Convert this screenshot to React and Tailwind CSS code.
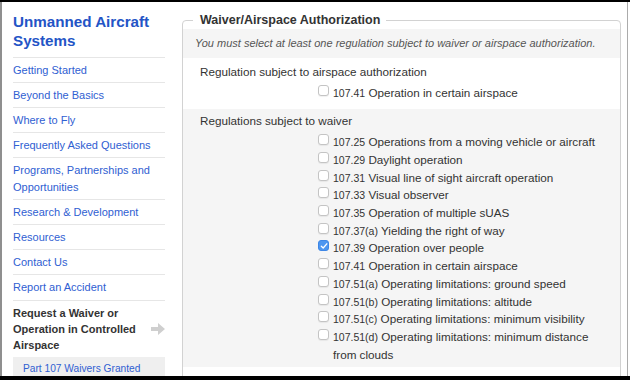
import React from "react";

const links = [
  "Getting Started",
  "Beyond the Basics",
  "Where to Fly",
  "Frequently Asked Questions",
  "Programs, Partnerships and Opportunities",
  "Research & Development",
  "Resources",
  "Contact Us",
  "Report an Accident",
];

const options = [
  ["107.25", "Operations from a moving vehicle or aircraft", false],
  ["107.29", "Daylight operation", false],
  ["107.31", "Visual line of sight aircraft operation", false],
  ["107.33", "Visual observer", false],
  ["107.35", "Operation of multiple sUAS", false],
  ["107.37(a)", "Yielding the right of way", false],
  ["107.39", "Operation over people", true],
  ["107.41", "Operation in certain airspace", false],
  ["107.51(a)", "Operating limitations: ground speed", false],
  ["107.51(b)", "Operating limitations: altitude", false],
  ["107.51(c)", "Operating limitations: minimum visibility", false],
  ["107.51(d)", "Operating limitations: minimum distance from clouds", false],
];

function Box({ checked }) {
  if (checked) {
    return (
      <span className="mt-[1px] flex h-[11px] w-[11px] shrink-0 items-center justify-center rounded-[3px] border border-[#3d86e6] bg-[#4d96f0]">
        <svg width="8" height="8" viewBox="0 0 8 8">
          <path d="M1.3 4.2 L3.2 6 L6.8 1.8" fill="none" stroke="#fff" strokeWidth="1.3" strokeLinecap="round" strokeLinejoin="round" />
        </svg>
      </span>
    );
  }
  return (
    <span className="mt-[1px] block h-[11px] w-[11px] shrink-0 rounded-[3px] border border-[#c4c4c4] bg-white shadow-[0_1px_1px_rgba(0,0,0,0.06)]" />
  );
}

function Option({ num, label, checked }) {
  return (
    <div className="flex gap-[4px]">
      <Box checked={checked} />
      <span className="text-[11.7px] leading-[17.7px] text-[#333]">
        <span className="text-[10.5px] leading-none">{num}</span> {label}
      </span>
    </div>
  );
}

export default function App() {
  return (
    <div className="h-[380px] w-[630px] overflow-hidden bg-black pt-[2px] font-['Liberation_Sans',Arial,sans-serif]">
      <div className="flex h-[374px] overflow-hidden border-l-2 border-[#8f8f8f] bg-white">
        <aside className="ml-[11px] w-[152px] shrink-0">
          <div className="border-b border-[#e6e6e6] pb-[7px] pt-[9.5px] text-[15.2px] font-bold leading-[19px] text-[#2354c6]">
            Unmanned Aircraft Systems
          </div>
          {links.map((l) => (
            <div key={l} className="border-b border-[#e6e6e6] py-[4px] text-[11px] leading-[16.2px] text-[#2f60d2]">
              {l}
            </div>
          ))}
          <div className="flex items-center py-[4px]">
            <div className="w-[135px] text-[11px] font-bold leading-[16.2px] text-[#333]">
              Request a Waiver or Operation in Controlled Airspace
            </div>
            <svg className="ml-auto" width="14" height="12" viewBox="0 0 14 12">
              <path d="M0 4 H7 V0 L14 6 L7 12 V8 H0 Z" fill="#cfcfcf" />
            </svg>
          </div>
          <div className="bg-[#efefef] py-[4px] pl-[10px] text-[10.2px] leading-[16px] text-[#2f60d2]">
            Part 107 Waivers Granted
          </div>
        </aside>
        <main className="ml-[17px] w-[446px] shrink-0 border-r border-[#ababab] pr-[6px] pt-[10px]">
          <fieldset className="h-[420px] rounded-[4px] border border-[#d2d2d2]">
            <legend className="ml-[10px] pl-[7px] pr-[6px] text-[12.5px] font-bold leading-[17px] text-[#333]">
              Waiver/Airspace Authorization
            </legend>
            <div className="h-[29px] bg-[#f5f5f5] pl-[12px] text-[11px] italic leading-[28px] text-[#555]">
              You must select at least one regulation subject to waiver or airspace authorization.
            </div>
            <div className="pb-[8px] pt-[5px]">
              <div className="pl-[17px] text-[11.7px] leading-[17px] text-[#333]">
                Regulation subject to airspace authorization
              </div>
              <div className="mt-[3.5px] pl-[135px]">
                <Option num="107.41" label="Operation in certain airspace" checked={false} />
              </div>
            </div>
            <div className="bg-[#f5f5f5] pb-[4px] pt-[3px]">
              <div className="pl-[17px] text-[11.7px] leading-[17px] text-[#333]">
                Regulations subject to waiver
              </div>
              <div className="mt-[4px] pl-[135px] pr-[12px]">
                {options.map(([n, l, c]) => (
                  <Option key={n} num={n} label={l} checked={c} />
                ))}
              </div>
            </div>
          </fieldset>
        </main>
      </div>
    </div>
  );
}
